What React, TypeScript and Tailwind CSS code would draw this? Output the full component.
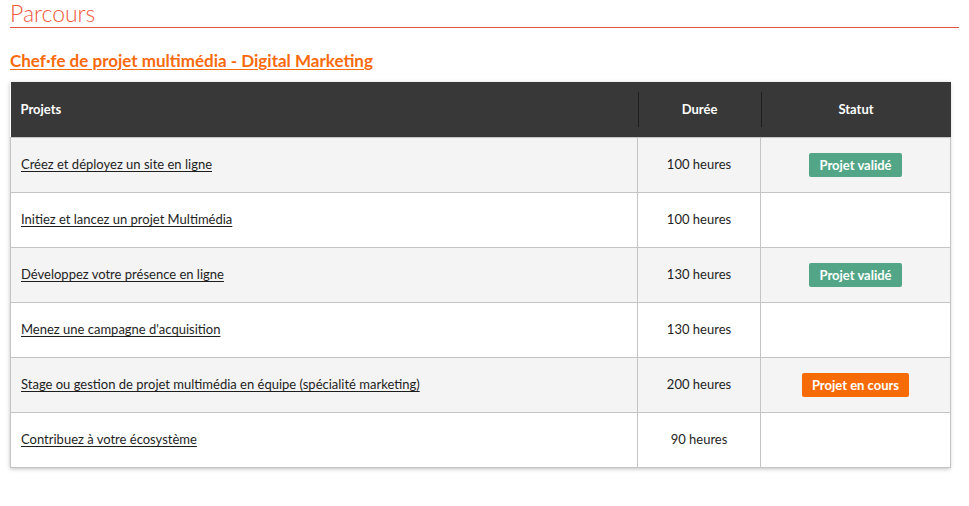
import React from "react";

type Row = { title: string; duree: string; statut?: "valide" | "encours" };

const rows: Row[] = [
  { title: "Créez et déployez un site en ligne", duree: "100 heures", statut: "valide" },
  { title: "Initiez et lancez un projet Multimédia", duree: "100 heures" },
  { title: "Développez votre présence en ligne", duree: "130 heures", statut: "valide" },
  { title: "Menez une campagne d'acquisition", duree: "130 heures" },
  {
    title: "Stage ou gestion de projet multimédia en équipe (spécialité marketing)",
    duree: "200 heures",
    statut: "encours",
  },
  { title: "Contribuez à votre écosystème", duree: "90 heures" },
];

function Badge({ statut }: { statut?: Row["statut"] }) {
  if (!statut) return null;
  if (statut === "valide")
    return (
      <span className="inline-block rounded-[2px] bg-[#52a687] px-[10px] py-[3px] text-[13px] font-bold leading-[18px] text-white">
        Projet validé
      </span>
    );
  return (
    <span className="inline-block rounded-[2px] bg-[#f76b07] px-[10px] py-[3px] text-[13px] font-bold leading-[18px] text-white">
      Projet en cours
    </span>
  );
}

export default function App() {
  return (
    <div className="min-h-[506px] bg-white px-[10px] font-['Lato',sans-serif] text-[#1e1e1e]">
      <h1 className="border-b border-[#e2553c] text-[23px] font-light leading-[27px] text-[#f2583c]">
        Parcours
      </h1>
      <h2 className="mt-[23px] text-[17px] font-bold leading-[20px] text-[#f96a0d] underline underline-offset-[2px]">
        Chef·fe de projet multimédia - Digital Marketing
      </h2>
      <div className="mt-[11px] w-[940px] shadow-[0_1px_4px_rgba(0,0,0,0.25)]">
        <table className="w-full table-fixed border-collapse text-[13px]">
          <colgroup>
            <col className="w-[627px]" />
            <col className="w-[123px]" />
            <col className="w-[190px]" />
          </colgroup>
          <thead>
            <tr className="h-[55px] bg-[#383838] text-white">
              <th className="px-[10px] text-left font-bold">Projets</th>
              <th className="py-[10px] font-bold">
                <div className="flex h-[35px] items-center justify-center border-l border-[#1f1f1f]">
                  Durée
                </div>
              </th>
              <th className="py-[10px] font-bold">
                <div className="flex h-[35px] items-center justify-center border-l border-[#1f1f1f]">
                  Statut
                </div>
              </th>
            </tr>
          </thead>
          <tbody>
            {rows.map((r, i) => (
              <tr
                key={r.title}
                className={`h-[55px] ${i % 2 === 0 ? "bg-[#f4f4f4]" : "bg-white"}`}
              >
                <td className="border border-[#c4c4c4] px-[10px]">
                  <a href="#" className="underline underline-offset-[2px]">
                    {r.title}
                  </a>
                </td>
                <td className="border border-[#c4c4c4] text-center">{r.duree}</td>
                <td className="border border-[#c4c4c4] text-center">
                  <Badge statut={r.statut} />
                </td>
              </tr>
            ))}
          </tbody>
        </table>
      </div>
    </div>
  );
}
